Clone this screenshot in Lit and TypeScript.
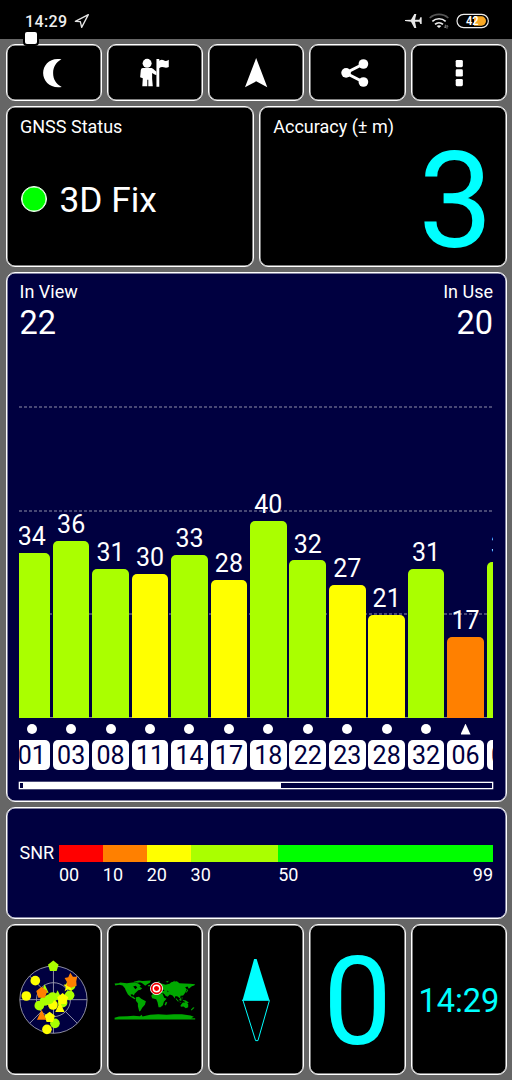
import { LitElement, html, svg, css } from "lit";
import { customElement } from "lit/decorators.js";

type Sat = { id: string; snr: number; height: number; shape: "dot" | "tri" };

const SATS: Sat[] = [
  { id: "01", snr: 34, height: 165.5, shape: "dot" },
  { id: "03", snr: 36, height: 177.5, shape: "dot" },
  { id: "08", snr: 31, height: 149.5, shape: "dot" },
  { id: "11", snr: 30, height: 144.5, shape: "dot" },
  { id: "14", snr: 33, height: 163.2, shape: "dot" },
  { id: "17", snr: 28, height: 138.2, shape: "dot" },
  { id: "18", snr: 40, height: 197.5, shape: "dot" },
  { id: "22", snr: 32, height: 157.7, shape: "dot" },
  { id: "23", snr: 27, height: 133.5, shape: "dot" },
  { id: "28", snr: 21, height: 103, shape: "dot" },
  { id: "32", snr: 31, height: 149, shape: "dot" },
  { id: "06", snr: 17, height: 81.4, shape: "tri" },
  { id: "09", snr: 32, height: 156, shape: "tri" },
];

const band = (v: number) =>
  v < 10 ? "red" : v < 20 ? "orange" : v <= 30 ? "yellow" : v < 50 ? "lime" : "green";

const SCALE = [
  { label: "00", span: 10, cls: "red" },
  { label: "10", span: 10, cls: "orange" },
  { label: "20", span: 10, cls: "yellow" },
  { label: "30", span: 20, cls: "lime" },
  { label: "50", span: 49, cls: "green", end: "99" },
];

// Toolbar glyphs, each on its own tile-sized canvas.
const moon = html`<svg viewBox="20.500 135 283.2 165"><path fill="#fff" d="M184 178C151 171 129 194 129 219C129 244 151 267 185 261C168 252 159 238 159 219C159 201 168 187 184 178Z"/></svg>`;
const guide = html`<svg viewBox="324.500 135 283.2 165"><g fill="#fff">
  <circle cx="442" cy="190" r="13.5"/>
  <path d="M429 204H452C457 204 460 206 463 209L470 215V225L466 224L457 219V236L459 259H445.500V239H442.500V259H427.500L429 235L421 232L423 210Q424 204 429 204Z"/>
  <path d="M470 177H478.500V182Q486 177 492 181T507 179V201Q500 205 492 202T478.500 205V260H470Z"/></g></svg>`;
const arrow = html`<svg viewBox="626.4 135 283.2 165"><path fill="#fff" d="M768 174L801.500 262L768 244L734.500 262Z"/></svg>`;
const share = html`<svg viewBox="930.6 135 283.2 165"><g fill="#fff"><path d="M1091 192L1038 219L1091 246" fill="none" stroke="#fff" stroke-width="9"/><circle cx="1091" cy="192" r="14.500"/><circle cx="1039" cy="218.500" r="14.500"/><circle cx="1091" cy="246" r="14.500"/></g></svg>`;
const more = html`<svg viewBox="1234.8 135 283.2 165"><g fill="#fff"><rect x="1366" y="180" width="21.500" height="21.500" rx="4"/><rect x="1366" y="208" width="21.500" height="21.500" rx="4"/><rect x="1366" y="237" width="21.500" height="21.500" rx="4"/></g></svg>`;

const DOTS: [number, number, string][] = [
  [105, 182, "y"], [78, 228, "y"], [208, 226, "l"], [117, 257, "l"], [164, 310, "l"],
  [140, 328, "y"], [187, 248, "l"], [157, 231, "l"], [133, 243, "l"], [145, 240, "l"], [158, 255, "y"], [211, 197, "l"], [147, 238, "l"],
];
const sky = html`<svg viewBox="20 15 283.2 447">
  <circle cx="159.500" cy="239" r="101" fill="#000040"/>
  <g fill="none" stroke="#a8a8b8" stroke-width="2.500"><circle cx="159.500" cy="239" r="101"/><circle cx="159.500" cy="239" r="51"/>
  <path d="M58.500 239H260.500M159.500 138V340M196 203L231 168M123 203L88 168M196 275L231 310M123 275L88 310"/></g>
  ${DOTS.map(([x, y, c]) => svg`<circle cx=${x} cy=${y} r="14.5" fill=${c === "y" ? "#ff0" : "#af0"}/>`)}
  <g fill="#af0"><path d="M159 121L175 134L169 153H149L143 134Z"/><path d="M133 193L145 218H122ZM172 211L186 239H158Z"/></g>
  <g fill="#ff0"><path d="M187 219L204 232L197 252H177L171 232ZM148 275L164 287L158 306H139L132 287ZM179 246L193 276H165Z"/><path d="M204 181L208 193L221 194L211 202L215 214L204 207L193 214L197 202L190 194L200 193Z"/></g>
  <g fill="#ff8000"><path d="M124 200L141 213L134 233H114L108 213ZM124 269L138 299H110Z"/><path d="M210 158L218 170L231 170L228 184L229 197L213 203L199 197L200 186L193 174L204 172Z"/></g>
</svg>`;

const world = html`<svg viewBox="8.200 -133.500 283.200 447">
  <g fill="#00a800">
    <path d="M28 42L40 41L45 39L65 41L76 40L89 38L99 42L107 48L103 52L111 56L106 61L99 62L92 69L88 73L86 78L81 74L76 75L78 80L85 82L91 88L88 89L76 82L68 75L62 64L59 56L52 48L42 46L30 48Z"/>
    <path d="M85 37L101 33L116 35L108 38L97 40Z"/>
    <path d="M101 35L137 33L134 40L126 44L120 49L113 43Z"/>
    <path d="M128 47L135 46L134 50L128 50Z"/>
    <path d="M92 83L101 82L108 88L122 95L119 106L111 115L106 124L102 126L98 110L98 101L92 94Z"/>
    <path d="M144 72L155 69L172 73L177 85L184 88L176 97L173 107L166 113L160 113L157 98L153 89L141 86L138 79Z"/>
    <path d="M182 97L186 99L182 108L178 106Z"/>
    <path d="M141 67L142 61L151 58L149 50L158 43L166 41L181 46L193 43L198 38L215 35L223 41L238 42L255 43L270 44L267 48L260 50L251 58L247 51L240 53L245 60L239 71L234 78L226 79L225 87L216 80L210 80L209 87L202 78L194 75L187 82L181 79L176 72L166 71L158 66L150 67Z"/>
    <path d="M246 57L249 64L243 70L241 68L246 63ZM181 37L191 34L187 39ZM157 36L165 35L160 39ZM142 51L146 56L142 58ZM202 37L207 34L211 36Z"/>
    <path d="M213 86L221 95L218 96L211 88ZM222 89L228 85L229 93L224 94ZM231 91L238 92L242 93L251 99L247 101L236 95ZM220 97L230 98L226 99ZM230 81L233 87L230 86Z"/>
    <path d="M226 107L233 99L239 99L243 97L249 104L249 113L242 116L235 111L227 112ZM264 113L268 115L259 123L257 121Z"/>
    <path d="M28 145L41 141L66 140L85 139L104 140L109 136L112 141L135 136L159 134L184 136L206 134L230 134L256 138L266 142L258 146H270V150H28Z"/>
  </g>
  <path fill="#000" d="M84 51L91 49L96 53L91 59L88 56ZM165 62L175 61L178 64L169 65ZM187 62L190 67L187 68ZM164 46L162 56L155 57L160 53Z"/>
  <circle cx="154" cy="57" r="19.500" fill="#fff"/><circle cx="154" cy="57" r="14.500" fill="none" stroke="#f00000" stroke-width="5"/><circle cx="154" cy="57" r="7.500" fill="#f00000"/>
</svg>`;

const compass = html`<svg viewBox="12 15 283.200 447"><path d="M147.500 117H155L193.500 240H113Z" fill="#0ff"/><path d="M112 241H193.500L159 362H152L114 241Z" fill="none" stroke="#0ff" stroke-width="3"/></svg>`;

@customElement("app-root")
export class AppRoot extends LitElement {
  static styles = css`
    * { box-sizing: border-box; }
    :host { display: flex; flex-direction: column; width: 512px; height: 1080px; background: #666; color: #fff;
      font: 400 18px/20px Roboto, sans-serif; position: relative; overflow: hidden; }
    svg { display: block; }
    .status { height: 39px; flex: none; background: #000; display: flex; justify-content: space-between; }
    .status svg { width: 256px; height: 39px; }
    .clock { font-weight: 500; fill: #eee; }
    .tab { position: absolute; left: 23px; top: 30px; width: 16px; height: 16px; background: #fff; border: 2px solid #000; border-radius: 4px; }
    .board { flex: 1; padding: 5px 5px 5px 5.500px; display: grid; grid-template-rows: 57px 161px 530px 112px 151px; gap: 5px; }
    .row { display: grid; gap: 5px; grid-template-columns: repeat(5, minmax(0, 1fr)); }
    .pair { grid-template-columns: repeat(2, minmax(0, 1fr)); }
    .tile { background: #000; border: 1px solid #fff; border-radius: 9px; box-shadow: inset 0 0 0 .5px #fff; min-width: 0; }
    .tile > svg { width: 100%; height: 100%; }
    .text { padding: 9.5px 13px 0 13.500px; }
    .navy { background: #000040; }
    .fix { display: flex; align-items: center; gap: 12.500px; font-size: 35.300px; line-height: 40px; margin-top: 43px; }
    .lamp { width: 26px; height: 26px; border-radius: 50%; background: #0f0; border: 1px solid #fff; box-shadow: inset 0 0 0 .5px #fff; margin: -2px 0 0 1px; }
    .big { font-size: 133px; line-height: 129px; color: #0ff; text-align: right; }
    .signal { padding: 9px 13px 12px 12.500px; display: flex; flex-direction: column; }
    .counts { display: flex; justify-content: space-between; padding-left: .500px; }
    .counts > div:last-child { text-align: right; }
    .num { font-size: 32.500px; line-height: 32px; margin-top: 5px; }
    .plot { flex: 1; display: grid; overflow: hidden; min-height: 0; }
    .plot > * { grid-area: 1 / 1; }
    .lines { width: 474px; height: 100%; }
    .track { display: grid; grid-auto-flow: column; grid-auto-columns: 36.6px; column-gap: 2.850px; margin-left: -5.600px; width: 520px; height: 100%; }
    .sat { display: flex; flex-direction: column; align-items: center; min-height: 0; }
    .sat .fill { flex: 1; }
    .val { font-size: 25px; line-height: 28px; height: 29.700px; flex: none; }
    .bar { width: 100%; flex: none; border-radius: 5px 5px 0 0; }
    .mark { height: 22px; flex: none; display: flex; align-items: center; justify-content: center; }
    .dot { width: 10px; height: 10px; border-radius: 50%; background: #fff; }
    .tri { width: 10px; height: 11px; background: #fff; clip-path: polygon(50% 0, 100% 100%, 0 100%); }
    .chip { height: 30px; width: 100%; flex: none; border-radius: 5px; background: #fff; color: #000040; text-align: center; font-size: 25px; line-height: 31px; }
    .scroll { height: 7px; flex: none; margin: 12px 0 0; border: 1px solid #fff; box-shadow: 0 0 0 .300px #fff; display: flex; padding-left: 1px; }
    .thumb { width: 260px; border-left: 2px solid #000040; background: #fff; }
    .red { background: #f00; } .orange { background: #ff8000; } .yellow { background: #ff0; }
    .lime { background: #af0; } .green { background: #0f0; }
    .snr { padding: 37px 13px 0 13px; display: grid; grid-template-columns: 39.500px 434px; grid-template-rows: 17px 24px; }
    .snr .name { line-height: 15px; }
    .scale { display: flex; min-width: 0; }
    .ticks { grid-column: 2; padding-top: 1.500px; }
    .tick { display: flex; justify-content: space-between; line-height: 22px; }
    .cyan { color: #0ff; display: flex; align-items: center; justify-content: center; }
    .speed { font-size: 122px; line-height: 130px; padding-top: 6px; }
    .time { font-size: 32.500px; padding-top: 2px; }
  `;

  private statusBar() {
    return html`<div class="status">
      <svg viewBox="0 0 768 117"><text class="clock" x="75" y="80" font-size="48" textLength="126">14:29</text>
        <path d="M265 44L245 82L241 65L226 64Z" fill="none" stroke="#e4e4e4" stroke-width="4" stroke-linejoin="round"/></svg>
      <svg viewBox="0 0 768 117">
        <path fill="#e8e8e8" d="M447 60L465 59L475 42H481L477 59H490L493 52H497V72H493L490 65H477L481 84H475L465 65L447 63Z"/>
        <g fill="none" stroke-width="5"><path stroke="#555" d="M521 54A42 42 0 0 1 577 54"/><path stroke="#eee" d="M529 64A30 30 0 0 1 569 64M537 73A18 18 0 0 1 561 73"/></g>
        <path fill="#eee" d="M549 84L542 78Q549 73 556 78Z"/>
        <path stroke="#bbb" stroke-width="2" fill="none" d="M568 74V84M565 80L568 84M573 86V76M576 80L573 76"/>
        <rect x="603" y="43" width="94" height="40" rx="20" fill="#000" stroke="#eee" stroke-width="3.500"/>
        <path fill="#f9a825" d="M654 49H676A14 14 0 0 1 676 77H654Z"/>
        <text x="649" y="75.500" text-anchor="middle" font-size="36" font-weight="600" fill="#fff" textLength="38" lengthAdjust="spacingAndGlyphs">42</text></svg>
    </div>`;
  }

  render() {
    return html`
      ${this.statusBar()}
      <div class="board">
        <div class="row">${[moon, guide, arrow, share, more].map((i) => html`<div class="tile">${i}</div>`)}</div>
        <div class="row pair">
          <div class="tile text"><div>GNSS Status</div><div class="fix"><span class="lamp"></span><span>3D Fix</span></div></div>
          <div class="tile text"><div>Accuracy (± m)</div><div class="big">3</div></div>
        </div>
        <div class="tile navy signal">
          <div class="counts">
            <div><div>In View</div><div class="num">22</div></div>
            <div><div>In Use</div><div class="num">20</div></div>
          </div>
          <div class="plot">
            <svg class="lines" viewBox="19 339 474 431" preserveAspectRatio="none">
              <path d="M19 407H493M19 511H493M19 614H493" stroke="#9090a8" stroke-width="1" stroke-dasharray="3 2"/>
              <path d="M19 717.500H493" stroke="#888" stroke-width="1"/>
            </svg>
            <div class="track">
              ${SATS.map((s) => html`<div class="sat">
                <div class="fill"></div>
                <div class="val">${s.snr}</div>
                <div class="bar ${band(s.snr)}" style="height:${s.height}px"></div>
                <div class="mark"><i class=${s.shape}></i></div>
                <div class="chip">${s.id}</div>
              </div>`)}
            </div>
          </div>
          <div class="scroll"><div class="thumb"></div></div>
        </div>
        <div class="tile navy snr">
          <div class="name">SNR</div>
          <div class="scale">${SCALE.map((s) => html`<div class=${s.cls} style="flex:${s.span} 0 0px"></div>`)}</div>
          <div class="scale ticks">${SCALE.map((s) => html`<div class="tick" style="flex:${s.span} 0 0px"><span>${s.label}</span><span>${s.end ?? ""}</span></div>`)}</div>
        </div>
        <div class="row">
          <div class="tile">${sky}</div>
          <div class="tile">${world}</div>
          <div class="tile">${compass}</div>
          <div class="tile cyan speed">0</div>
          <div class="tile cyan time">14:29</div>
        </div>
      </div>
      <div class="tab"></div>
    `;
  }
}
